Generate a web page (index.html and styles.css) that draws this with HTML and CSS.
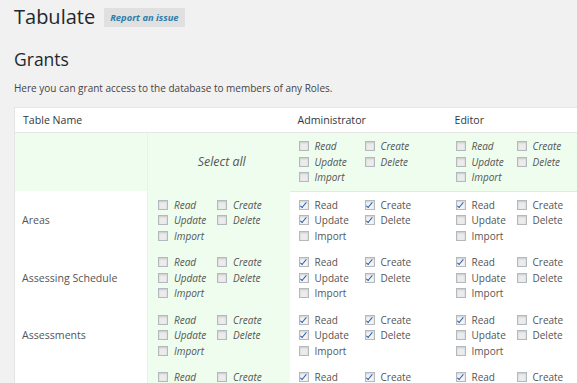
FILE: index.html
```html
<!DOCTYPE html>
<html lang="en">
<head>
    <meta charset="UTF-8">
    <meta name="viewport" content="width=device-width, initial-scale=1.0">
    <title>Tabulate - Grants</title>
    <link rel="stylesheet" href="styles.css">
</head>
<body>
    <div class="wrap">
        <h1>Tabulate <a class="title-action" href="#">Report an issue</a></h1>
        <h2>Grants</h2>
        <p class="intro">Here you can grant access to the database to members of any Roles.</p>

        <table class="grants">
            <colgroup>
                <col class="col-name">
                <col class="col-all">
                <col class="col-role">
                <col class="col-role">
            </colgroup>
            <thead>
                <tr>
                    <th>Table Name</th>
                    <th></th>
                    <th>Administrator</th>
                    <th>Editor</th>
                </tr>
            </thead>
            <tbody>
                <tr class="select-row">
                    <td></td>
                    <td class="all select-all">Select all</td>
                    <td class="role">
                        <div class="perms italic wide">
                            <label><input type="checkbox">Read</label>
                            <label><input type="checkbox">Create</label>
                            <label><input type="checkbox">Update</label>
                            <label><input type="checkbox">Delete</label>
                            <label><input type="checkbox">Import</label>
                        </div>
                    </td>
                    <td class="role">
                        <div class="perms italic">
                            <label><input type="checkbox">Read</label>
                            <label><input type="checkbox">Create</label>
                            <label><input type="checkbox">Update</label>
                            <label><input type="checkbox">Delete</label>
                            <label><input type="checkbox">Import</label>
                        </div>
                    </td>
                </tr>

                <tr>
                    <td class="name">Areas</td>
                    <td class="all">
                        <div class="perms italic narrow">
                            <label><input type="checkbox">Read</label>
                            <label><input type="checkbox">Create</label>
                            <label><input type="checkbox">Update</label>
                            <label><input type="checkbox">Delete</label>
                            <label><input type="checkbox">Import</label>
                        </div>
                    </td>
                    <td class="role">
                        <div class="perms wide">
                            <label><input type="checkbox" checked>Read</label>
                            <label><input type="checkbox" checked>Create</label>
                            <label><input type="checkbox" checked>Update</label>
                            <label><input type="checkbox" checked>Delete</label>
                            <label><input type="checkbox">Import</label>
                        </div>
                    </td>
                    <td class="role">
                        <div class="perms">
                            <label><input type="checkbox" checked>Read</label>
                            <label><input type="checkbox">Create</label>
                            <label><input type="checkbox">Update</label>
                            <label><input type="checkbox">Delete</label>
                            <label><input type="checkbox">Import</label>
                        </div>
                    </td>
                </tr>

                <tr>
                    <td class="name">Assessing Schedule</td>
                    <td class="all">
                        <div class="perms italic narrow">
                            <label><input type="checkbox">Read</label>
                            <label><input type="checkbox">Create</label>
                            <label><input type="checkbox">Update</label>
                            <label><input type="checkbox">Delete</label>
                            <label><input type="checkbox">Import</label>
                        </div>
                    </td>
                    <td class="role">
                        <div class="perms wide">
                            <label><input type="checkbox" checked>Read</label>
                            <label><input type="checkbox" checked>Create</label>
                            <label><input type="checkbox" checked>Update</label>
                            <label><input type="checkbox" checked>Delete</label>
                            <label><input type="checkbox">Import</label>
                        </div>
                    </td>
                    <td class="role">
                        <div class="perms">
                            <label><input type="checkbox" checked>Read</label>
                            <label><input type="checkbox">Create</label>
                            <label><input type="checkbox">Update</label>
                            <label><input type="checkbox">Delete</label>
                            <label><input type="checkbox">Import</label>
                        </div>
                    </td>
                </tr>

                <tr>
                    <td class="name">Assessments</td>
                    <td class="all">
                        <div class="perms italic narrow">
                            <label><input type="checkbox">Read</label>
                            <label><input type="checkbox">Create</label>
                            <label><input type="checkbox">Update</label>
                            <label><input type="checkbox">Delete</label>
                            <label><input type="checkbox">Import</label>
                        </div>
                    </td>
                    <td class="role">
                        <div class="perms wide">
                            <label><input type="checkbox" checked>Read</label>
                            <label><input type="checkbox" checked>Create</label>
                            <label><input type="checkbox" checked>Update</label>
                            <label><input type="checkbox" checked>Delete</label>
                            <label><input type="checkbox">Import</label>
                        </div>
                    </td>
                    <td class="role">
                        <div class="perms">
                            <label><input type="checkbox" checked>Read</label>
                            <label><input type="checkbox">Create</label>
                            <label><input type="checkbox">Update</label>
                            <label><input type="checkbox">Delete</label>
                            <label><input type="checkbox">Import</label>
                        </div>
                    </td>
                </tr>

                <tr>
                    <td class="name">Assessments</td>
                    <td class="all">
                        <div class="perms italic narrow">
                            <label><input type="checkbox">Read</label>
                            <label><input type="checkbox">Create</label>
                            <label><input type="checkbox">Update</label>
                            <label><input type="checkbox">Delete</label>
                            <label><input type="checkbox">Import</label>
                        </div>
                    </td>
                    <td class="role">
                        <div class="perms wide">
                            <label><input type="checkbox" checked>Read</label>
                            <label><input type="checkbox" checked>Create</label>
                            <label><input type="checkbox" checked>Update</label>
                            <label><input type="checkbox" checked>Delete</label>
                            <label><input type="checkbox">Import</label>
                        </div>
                    </td>
                    <td class="role">
                        <div class="perms">
                            <label><input type="checkbox" checked>Read</label>
                            <label><input type="checkbox">Create</label>
                            <label><input type="checkbox">Update</label>
                            <label><input type="checkbox">Delete</label>
                            <label><input type="checkbox">Import</label>
                        </div>
                    </td>
                </tr>
            </tbody>
        </table>
    </div>
</body>
</html>
```

FILE: styles.css
```css
* {
    margin: 0;
    padding: 0;
    box-sizing: border-box;
}

html, body {
    overflow: hidden;
}

body {
    background-color: #f1f1f1;
    color: #444;
    font-family: "Open Sans", "Liberation Sans", sans-serif;
    font-size: 10px;
}

.wrap {
    padding: 4px 0 0 14px;
}

h1 {
    font-size: 20px;
    font-weight: 400;
    line-height: 26px;
    color: #23282d;
    display: flex;
    align-items: center;
    gap: 9px;
}

.title-action {
    display: inline-block;
    background-color: #e0e0e0;
    color: #2e7dab;
    font-size: 9.4px;
    font-weight: 700;
    font-style: italic;
    text-decoration: none;
    line-height: 19px;
    padding: 0 6px;
    margin-top: 1px;
}

h2 {
    font-size: 17.5px;
    font-weight: 400;
    line-height: 24px;
    color: #23282d;
    margin-top: 17px;
}

.intro {
    font-size: 10px;
    line-height: 14px;
    color: #444;
    margin-top: 10px;
}

.grants {
    margin-top: 12px;
    width: 590px;
    table-layout: fixed;
    border-collapse: collapse;
    background-color: #fff;
    border: 1px solid #e5e5e5;
}

.col-name {
    width: 133px;
}

.col-all {
    width: 142px;
}

.col-role {
    width: 157px;
}

th {
    text-align: left;
    font-weight: 400;
    font-size: 10.6px;
    line-height: 14px;
    color: #32373c;
    padding: 5px 8px 5px 8px;
    border-bottom: 1px solid #e5e5e5;
}

td {
    vertical-align: middle;
    padding: 5px 0 5px 9px;
}

.name {
    font-size: 10.6px;
    color: #555;
    padding-left: 7px;
}

.all {
    background-color: #eefdee;
    padding-left: 10px;
    border-left: 1px solid #e6f3e6;
}

.select-row td {
    background-color: #eefdee;
}

.select-row td.role {
    border-bottom: 1px solid #e3e8e3;
}

.select-all {
    text-align: center;
    font-style: italic;
    font-size: 12.4px;
    color: #555;
    padding-left: 6px;
    padding-bottom: 6px;
}

.perms {
    display: grid;
    grid-template-columns: 61px auto;
    grid-auto-rows: 15.5px;
    padding: 0.5px 0;
}

.perms.wide {
    grid-template-columns: 66px auto;
}

.perms.narrow {
    grid-template-columns: 59px auto;
}

.perms label {
    display: flex;
    align-items: center;
    gap: 6px;
    font-size: 10px;
    color: #555;
    white-space: nowrap;
}

.perms.italic label {
    font-style: italic;
}

input[type="checkbox"] {
    appearance: none;
    -webkit-appearance: none;
    width: 10px;
    height: 10px;
    border: 1px solid #b4b9be;
    background-color: #ececec;
    box-shadow: inset 0 1px 2px rgba(0, 0, 0, 0.15);
    position: relative;
    flex-shrink: 0;
}

input[type="checkbox"]:checked {
    background-color: #f4f4f4;
}

input[type="checkbox"]:checked::before {
    content: "";
    position: absolute;
    left: 2.5px;
    top: 0px;
    width: 2px;
    height: 5.5px;
    border-right: 1.6px solid #2a5fb0;
    border-bottom: 1.6px solid #2a5fb0;
    transform: rotate(40deg);
}
```
